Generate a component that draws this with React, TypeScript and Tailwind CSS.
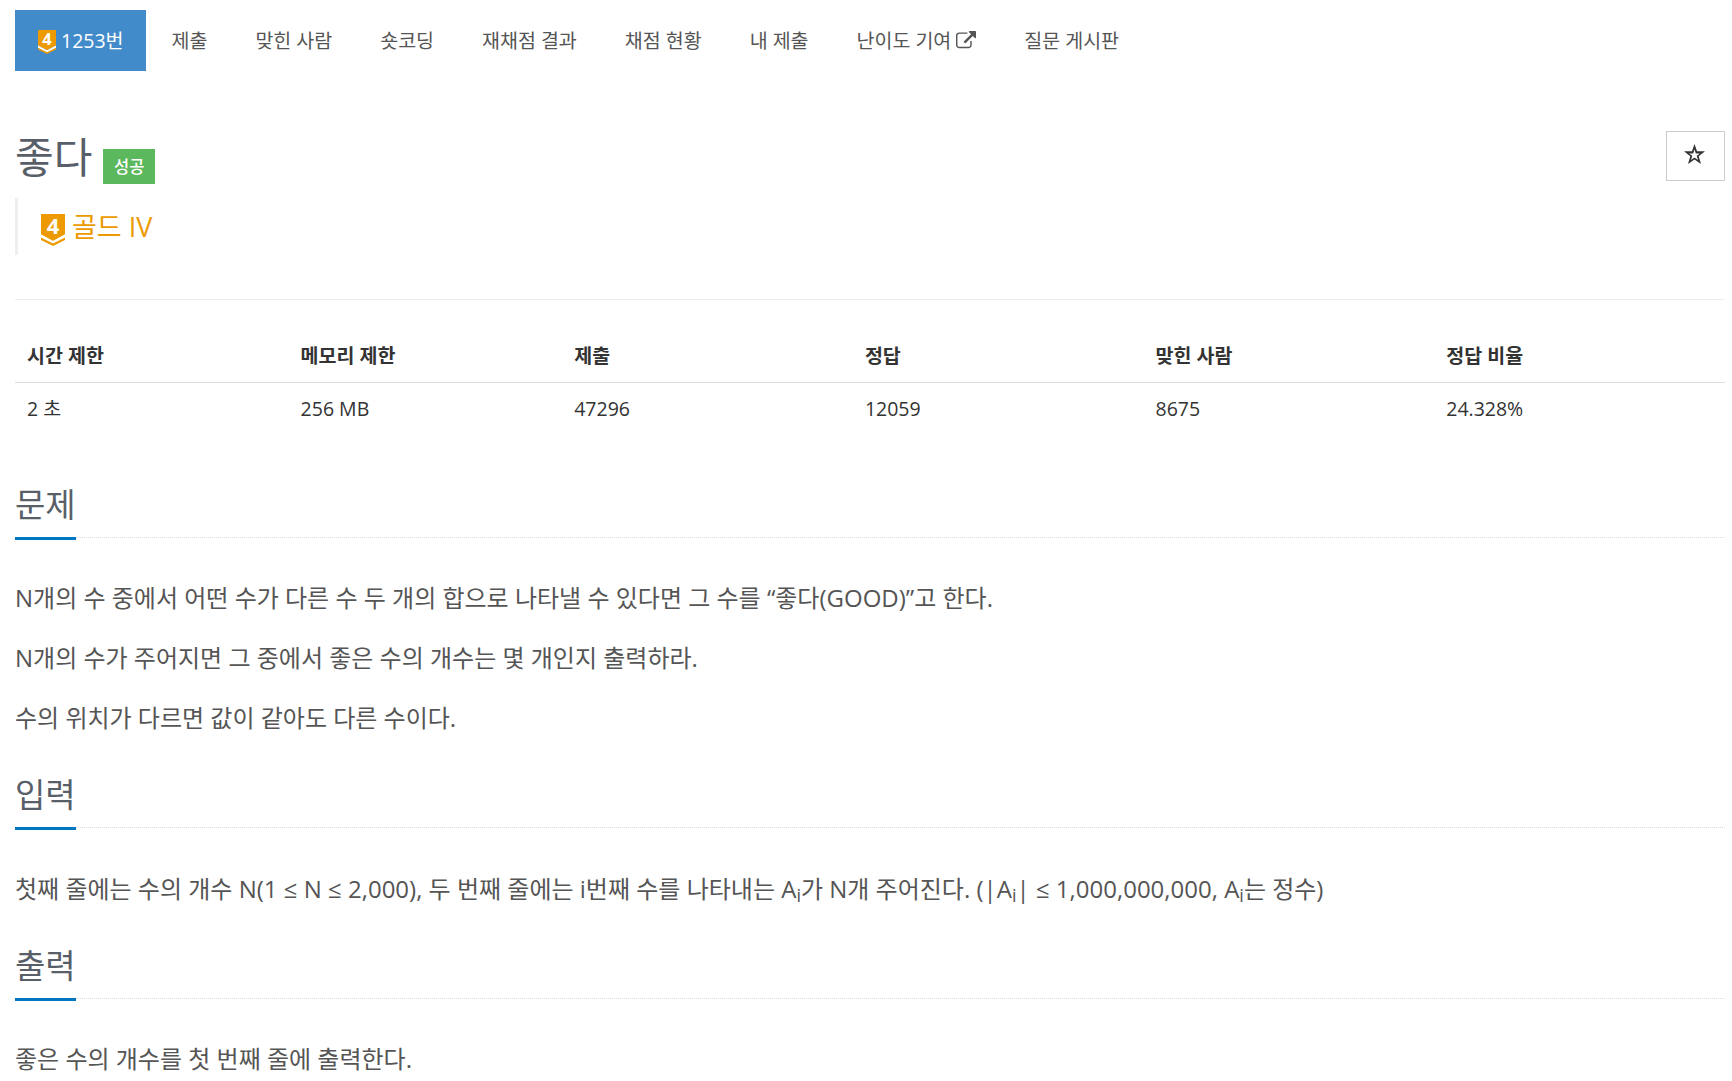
import React from "react";

const tabs = [
  "제출",
  "맞힌 사람",
  "숏코딩",
  "재채점 결과",
  "채점 현황",
  "내 제출",
  "난이도 기여",
  "질문 게시판",
];

const limits = [
  { label: "시간 제한", value: "2 초", width: "w-[16%]" },
  { label: "메모리 제한", value: "256 MB", width: "w-[16%]" },
  { label: "제출", value: "47296", width: "w-[17%]" },
  { label: "정답", value: "12059", width: "w-[17%]" },
  { label: "맞힌 사람", value: "8675", width: "w-[17%]" },
  { label: "정답 비율", value: "24.328%", width: "w-[17%]" },
];

function TierBadge({ className }: { className: string }) {
  return (
    <svg viewBox="0 0 24 32" overflow="visible" className={className}>
      <path d="M0 0h24v20.5L12 27 0 20.5z" fill="#ec9a00" />
      <path d="M0 20.5 12 27l12-6.500v3.500L12 30 0 24z" fill="#fff" />
      <path d="M0 23.500 12 29.500l12-6v2.500L12 32 0 26z" fill="#ec9a00" />
      <text
        x="12"
        y="20.3"
        textAnchor="middle"
        fontSize="22"
        fontWeight="700"
        fill="#fff"
      >
        4
      </text>
    </svg>
  );
}

function ExternalLink() {
  return (
    <svg
      viewBox="0 0 1792 1792"
      className="ml-[5px] size-5"
      fill="currentColor"
    >
      <path d="M1408 928v320q0 119-84.500 203.500t-203.500 84.500h-832q-119 0-203.500-84.500t-84.500-203.500v-832q0-119 84.500-203.500t203.500-84.500h704q14 0 23 9t9 23v64q0 14-9 23t-23 9h-704q-66 0-113 47t-47 113v832q0 66 47 113t113 47h832q66 0 113-47t47-113v-320q0-14 9-23t23-9h64q14 0 23 9t9 23zm384-864v512q0 26-19 45t-45 19-45-19l-176-176-652 652q-10 10-23 10t-23-10l-114-114q-10-10-10-23t10-23l652-652-176-176q-19-19-19-45t19-45 45-19h512q26 0 45 19t19 45z" />
    </svg>
  );
}

function Star() {
  return (
    <svg viewBox="0 0 20 20" className="mr-[2px] size-[21px]">
      <path
        d="M10 0l2.400 7H20l-6 4.600L16.200 19 10 14.700 3.800 19 6 11.600 0 7h7.600zM10 5.300 8.700 9H4.900l3 2.300-1.200 3.900L10 12.900l3.300 2.300-1.200-3.900 3-2.300h-3.800z"
        fill="#333"
        fillRule="evenodd"
      />
    </svg>
  );
}

function Section({
  title,
  className = "",
  children,
}: {
  title: string;
  className?: string;
  children: React.ReactNode;
}) {
  return (
    <section className={className}>
      <div className="flex h-[61px] border-b border-dotted border-[#d8dce2]">
        <h2 className="-mb-[3px] h-[63px] border-b-[3px] border-[#0076c0] text-[33px] leading-[56px] text-[#585f69]">
          {title}
        </h2>
      </div>
      <div className="mt-[37px] space-y-[15px] text-[24px] leading-[45px] text-[#555]">
        {children}
      </div>
    </section>
  );
}

function Sub() {
  return <sub className="-bottom-[0.2em] text-[18px] leading-none">i</sub>;
}

export default function App() {
  return (
    <div className="h-[1081px] overflow-hidden bg-white pt-[10px] pr-[7px] pl-[15px] font-['Open_Sans','Noto_Sans_CJK_KR',sans-serif] text-[19.5px] text-[#333]">
      <nav className="flex h-[61px] items-center gap-[3px] text-[#555]">
        <a className="flex h-full w-[131px] items-center bg-[#428bca] pl-[23px] text-white">
          <TierBadge className="mt-[2px] mr-[5px] h-6 w-[18px]" />
          1253번
        </a>
        {tabs.map(tab => (
          <a key={tab} className="flex items-center px-[22.5px]">
            {tab}
            {tab === "난이도 기여" && <ExternalLink />}
          </a>
        ))}
      </nav>

      <header className="mt-[60px] flex h-[67px] items-start justify-between">
        <div className="flex items-start">
          <h1 className="text-[42px] leading-[52px] text-[#585f69]">좋다</h1>
          <span className="mt-[18px] ml-[11px] flex h-[35px] w-[52px] items-center justify-center bg-[#5cb85c] pt-[2px] text-[16.5px] font-medium text-white">
            성공
          </span>
        </div>
        <button className="flex h-[50px] w-[59px] items-center justify-center border border-[#ccc] pb-[3px]">
          <Star />
        </button>
      </header>

      <blockquote className="flex h-[57px] items-center border-l-[3px] border-[#eee] pl-[23px] text-[27px] text-[#ec9a00]">
        <TierBadge className="mt-[7px] mr-[7px] h-8 w-6" />
        <span className="pt-[2px]">골드 IV</span>
      </blockquote>

      <hr className="mt-11 border-[#eee]" />

      <table className="mt-[30px] w-full table-fixed text-left leading-[28px]">
        <thead>
          <tr className="border-b border-[#ddd]">
            {limits.map(({ label, width }) => (
              <th key={label} className={`${width} p-3 font-bold`}>
                {label}
              </th>
            ))}
          </tr>
        </thead>
        <tbody>
          <tr>
            {limits.map(({ label, value }) => (
              <td key={label} className="p-3">
                {value}
              </td>
            ))}
          </tr>
        </tbody>
      </table>

      <Section title="문제" className="mt-[42px]">
        <p>N개의 수 중에서 어떤 수가 다른 수 두 개의 합으로 나타낼 수 있다면 그 수를 “좋다(GOOD)”고 한다.</p>
        <p>N개의 수가 주어지면 그 중에서 좋은 수의 개수는 몇 개인지 출력하라.</p>
        <p>수의 위치가 다르면 값이 같아도 다른 수이다.</p>
      </Section>

      <Section title="입력" className="mt-[27px]">
        <p className="pt-px">
          첫째 줄에는 수의 개수 N(1 ≤ N ≤ 2,000), 두 번째 줄에는 i번째 수를 나타내는 A
          <Sub />가 N개 주어진다. (|A
          <Sub />| ≤ 1,000,000,000, A
          <Sub />는 정수)
        </p>
      </Section>

      <Section title="출력" className="mt-[27px]">
        <p>좋은 수의 개수를 첫 번째 줄에 출력한다.</p>
      </Section>
    </div>
  );
}
